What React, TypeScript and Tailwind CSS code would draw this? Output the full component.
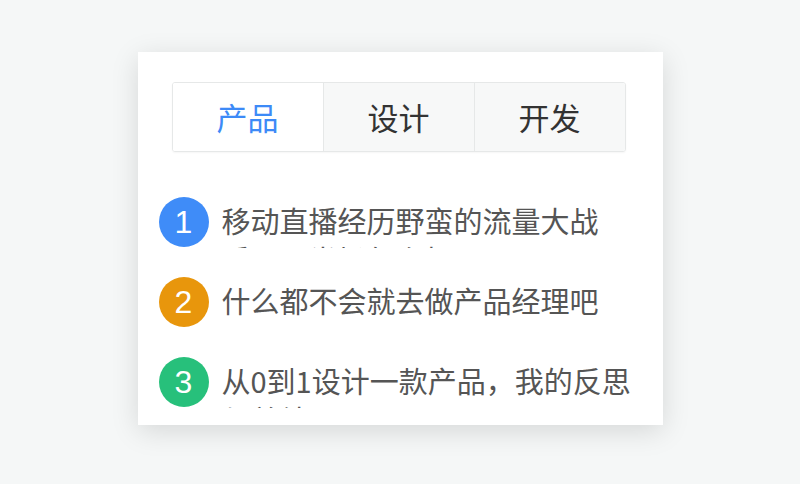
import React, { useState } from "react";

const tabs = ["产品", "设计", "开发"];

const articles = [
  { title: "移动直播经历野蛮的流量大战后，下半场怎么打", color: "bg-[#3f8cf8]" },
  { title: "什么都不会就去做产品经理吧", color: "bg-[#e8960c]" },
  { title: "从0到1设计一款产品，我的反思与总结", color: "bg-[#27c07b]" },
];

export default function App() {
  const [active, setActive] = useState(0);

  return (
    <div
      className="min-h-screen bg-[#f5f7f7] flex justify-center pt-[52px]"
      style={{ fontFamily: '"Noto Sans CJK SC", "Noto Sans", sans-serif' }}
    >
      <div className="w-[525px] h-[373px] bg-white shadow-[0_6px_26px_rgba(0,0,0,0.13)] pt-[30px] flex flex-col">
        {/* Tabs */}
        <div className="mx-[34px] w-[454px] h-[70px] flex border border-[#e6e8e8] rounded-[3px] overflow-hidden shadow-[0_1px_2px_rgba(0,0,0,0.04)]">
          {tabs.map((tab, idx) => (
            <button
              key={tab}
              onClick={() => setActive(idx)}
              className={`flex-1 flex items-center justify-center text-[31px] ${
                idx > 0 ? "border-l border-[#e6e8e8]" : ""
              } ${idx === active ? "bg-white text-[#3d8af7]" : "bg-[#f7f8f8] text-[#333]"}`}
            >
              {tab}
            </button>
          ))}
        </div>

        {/* List */}
        <ul className="mt-[45px] pl-[21px] pr-[23px] flex flex-col gap-[30px]">
          {articles.map((item, idx) => (
            <li key={idx} className="flex gap-[13px] h-[50px]">
              <span
                className={`w-[50px] h-[50px] shrink-0 rounded-full ${item.color} text-white text-[32px] flex items-center justify-center`}
                style={{ fontFamily: '"Liberation Sans", sans-serif' }}
              >
                {idx + 1}
              </span>
              <p className="flex-1 h-[51px] overflow-hidden text-[29px] leading-[39px] pt-[4px] text-[#555]">
                {item.title}
              </p>
            </li>
          ))}
        </ul>
      </div>
    </div>
  );
}
